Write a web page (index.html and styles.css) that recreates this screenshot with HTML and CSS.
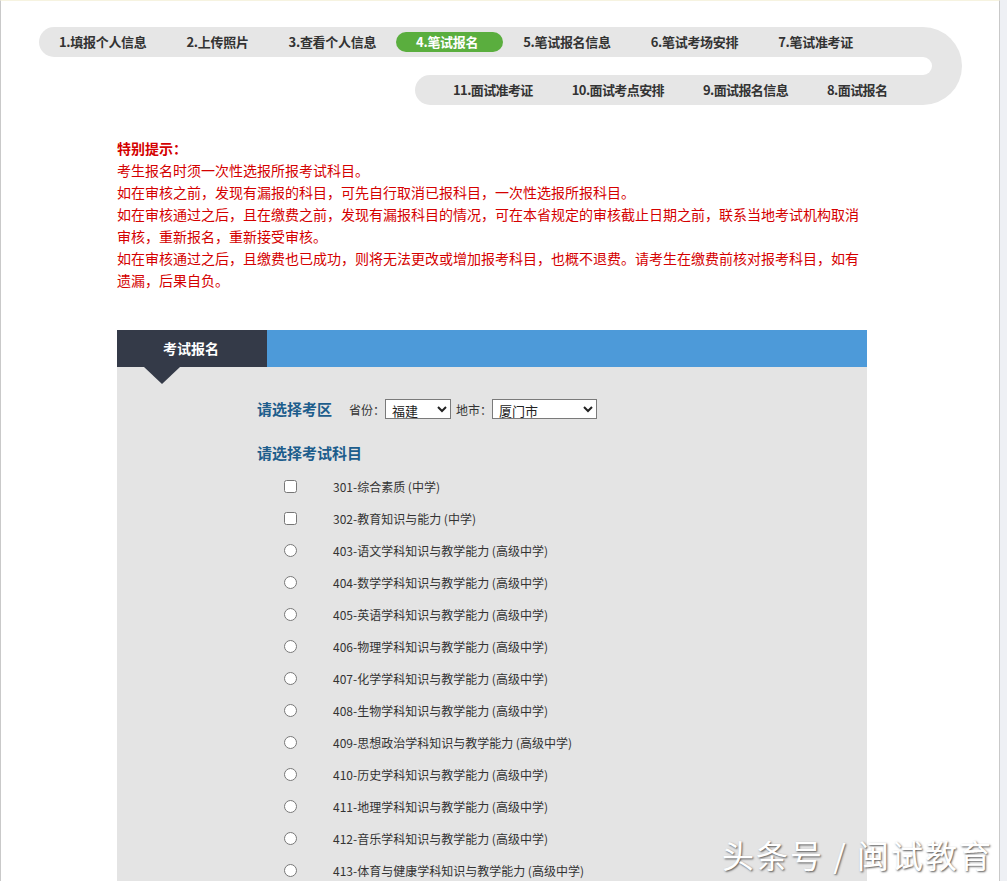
FILE: index.html
```html
<!DOCTYPE html>
<html lang="zh-CN">
<head>
    <meta charset="UTF-8">
    <title>笔试报名</title>
    <link rel="stylesheet" href="styles.css">
</head>
<body>

<div class="page">

    <div class="steps">
        <div class="steps-top">
            <span class="step">1.填报个人信息</span>
            <span class="step">2.上传照片</span>
            <span class="step">3.查看个人信息</span>
            <span class="step current">4.笔试报名</span>
            <span class="step">5.笔试报名信息</span>
            <span class="step">6.笔试考场安排</span>
            <span class="step">7.笔试准考证</span>
        </div>
        <div class="steps-turn">
            <div class="turn-notch"></div>
        </div>
        <div class="steps-bottom">
            <span class="step">11.面试准考证</span>
            <span class="step">10.面试考点安排</span>
            <span class="step">9.面试报名信息</span>
            <span class="step">8.面试报名</span>
        </div>
    </div>

    <div class="notice">
        <strong>特别提示：</strong><br>
        考生报名时须一次性选报所报考试科目。<br>
        如在审核之前，发现有漏报的科目，可先自行取消已报科目，一次性选报所报科目。<br>
        如在审核通过之后，且在缴费之前，发现有漏报科目的情况，可在本省规定的审核截止日期之前，联系当地考试机构取消审核，重新报名，重新接受审核。<br>
        如在审核通过之后，且缴费也已成功，则将无法更改或增加报考科目，也概不退费。请考生在缴费前核对报考科目，如有遗漏，后果自负。
    </div>

    <div class="signup">
        <div class="signup-head">
            <div class="signup-tab">考试报名</div>
        </div>
        <div class="signup-body">
            <div class="zone-row">
                <span class="section-title">请选择考区</span>
                <label class="field">省份：
                    <select class="sel-province">
                        <option>福建</option>
                    </select>
                </label>
                <label class="field">地市：
                    <select class="sel-city">
                        <option>厦门市</option>
                    </select>
                </label>
            </div>

            <div class="section-title subjects-title">请选择考试科目</div>

            <ul class="subjects">
                <li><input type="checkbox"><span>301-综合素质 (中学)</span></li>
                <li><input type="checkbox"><span>302-教育知识与能力 (中学)</span></li>
                <li><input type="radio" name="sub"><span>403-语文学科知识与教学能力 (高级中学)</span></li>
                <li><input type="radio" name="sub"><span>404-数学学科知识与教学能力 (高级中学)</span></li>
                <li><input type="radio" name="sub"><span>405-英语学科知识与教学能力 (高级中学)</span></li>
                <li><input type="radio" name="sub"><span>406-物理学科知识与教学能力 (高级中学)</span></li>
                <li><input type="radio" name="sub"><span>407-化学学科知识与教学能力 (高级中学)</span></li>
                <li><input type="radio" name="sub"><span>408-生物学科知识与教学能力 (高级中学)</span></li>
                <li><input type="radio" name="sub"><span>409-思想政治学科知识与教学能力 (高级中学)</span></li>
                <li><input type="radio" name="sub"><span>410-历史学科知识与教学能力 (高级中学)</span></li>
                <li><input type="radio" name="sub"><span>411-地理学科知识与教学能力 (高级中学)</span></li>
                <li><input type="radio" name="sub"><span>412-音乐学科知识与教学能力 (高级中学)</span></li>
                <li><input type="radio" name="sub"><span>413-体育与健康学科知识与教学能力 (高级中学)</span></li>
            </ul>
        </div>
    </div>

</div>

<div class="watermark">头条号 / 闽试教育</div>

</body>
</html>
```

FILE: styles.css
```css
body {
    margin: 0;
    background-color: #eef0f4;
    font-family: "Noto Sans CJK SC", "Liberation Sans", sans-serif;
    color: #333;
}

.page {
    width: 1000px;
    min-height: 881px;
    background-color: #fff;
    border-left: 1px solid #c9c9c9;
    border-right: 1px solid #c9c9c9;
    border-top: 1px solid #f6f3e0;
    box-sizing: border-box;
    overflow: hidden;
}

/* step track */
.steps {
    display: grid;
    grid-template-columns: 1fr 69px;
    grid-template-rows: 30px 18px 30px;
    width: 923px;
    margin: 26px 0 0 38px;
}

.steps-top,
.steps-bottom {
    display: flex;
    align-items: center;
    background-color: #e6e6e6;
    border-radius: 15px 0 0 15px;
}

.steps-top {
    grid-column: 1;
    grid-row: 1;
}

.steps-bottom {
    grid-column: 1;
    grid-row: 3;
    justify-self: end;
    width: 478px;
    box-sizing: border-box;
    padding-left: 18px;
}

.steps-turn {
    grid-column: 2;
    grid-row: 1 / 4;
    display: flex;
    align-items: center;
    background-color: #e6e6e6;
    border-radius: 0 39px 39px 0;
}

.turn-notch {
    width: 39px;
    height: 18px;
    background-color: #fff;
    border-radius: 0 9px 9px 0;
}

.step {
    padding: 0 20px;
    font-size: 13px;
    font-weight: bold;
    line-height: 20px;
    color: #333;
    white-space: nowrap;
    letter-spacing: -0.3px;
}

.steps-bottom .step {
    padding: 0 19px 0 20px;
    letter-spacing: -0.6px;
}

.step.current {
    background-color: #5aae3e;
    color: #fff;
    border-radius: 10px;
    padding: 0 25px 0 20px;
}

/* notice */
.notice {
    width: 750px;
    margin: 32px 0 0 116px;
    font-size: 14px;
    line-height: 22px;
    color: #d40000;
}

/* signup box */
.signup {
    width: 750px;
    margin: 39px 0 0 116px;
    background-color: #e4e4e4;
}

.signup-head {
    height: 37px;
    background-color: #4d9ad9;
}

.signup-tab {
    position: relative;
    width: 150px;
    height: 37px;
    box-sizing: border-box;
    padding-left: 46px;
    background-color: #343a48;
    color: #fff;
    font-size: 14px;
    font-weight: bold;
    line-height: 36px;
}

.signup-tab::after {
    content: "";
    position: absolute;
    left: 27px;
    top: 37px;
    border-left: 18px solid transparent;
    border-right: 18px solid transparent;
    border-top: 17px solid #343a48;
}

.signup-body {
    padding: 32px 0 20px 140px;
}

.zone-row {
    display: flex;
    align-items: center;
    height: 20px;
}

.section-title {
    font-size: 15px;
    font-weight: bold;
    color: #1d5d8c;
    line-height: 20px;
}

.field {
    display: flex;
    align-items: center;
    font-size: 12px;
    color: #333;
    margin-left: 5px;
}

.zone-row .section-title {
    margin-right: 12px;
}

select {
    height: 20px;
    font-size: 13px;
    line-height: 18px;
    font-family: "Noto Sans CJK SC", sans-serif;
    border: 1px solid #7a7a7a;
    border-radius: 0;
    background-color: #fff;
    padding: 0 0 0 2px;
    color: #222;
}

.sel-province {
    width: 66px;
}

.sel-city {
    width: 105px;
}

.subjects-title {
    margin-top: 24px;
}

.subjects {
    list-style: none;
    margin: 7px 0 0 0;
    padding: 0;
}

.subjects li {
    display: flex;
    align-items: center;
    height: 32px;
    font-size: 12px;
    color: #333;
}

.subjects input {
    width: 13px;
    height: 13px;
    margin: 0 36px 0 27px;
}

/* watermark */
.watermark {
    position: absolute;
    left: 722px;
    top: 831px;
    font-size: 32px;
    color: #fff;
    letter-spacing: 2px;
    text-shadow: 1px 1px 2px #555;
}
```
